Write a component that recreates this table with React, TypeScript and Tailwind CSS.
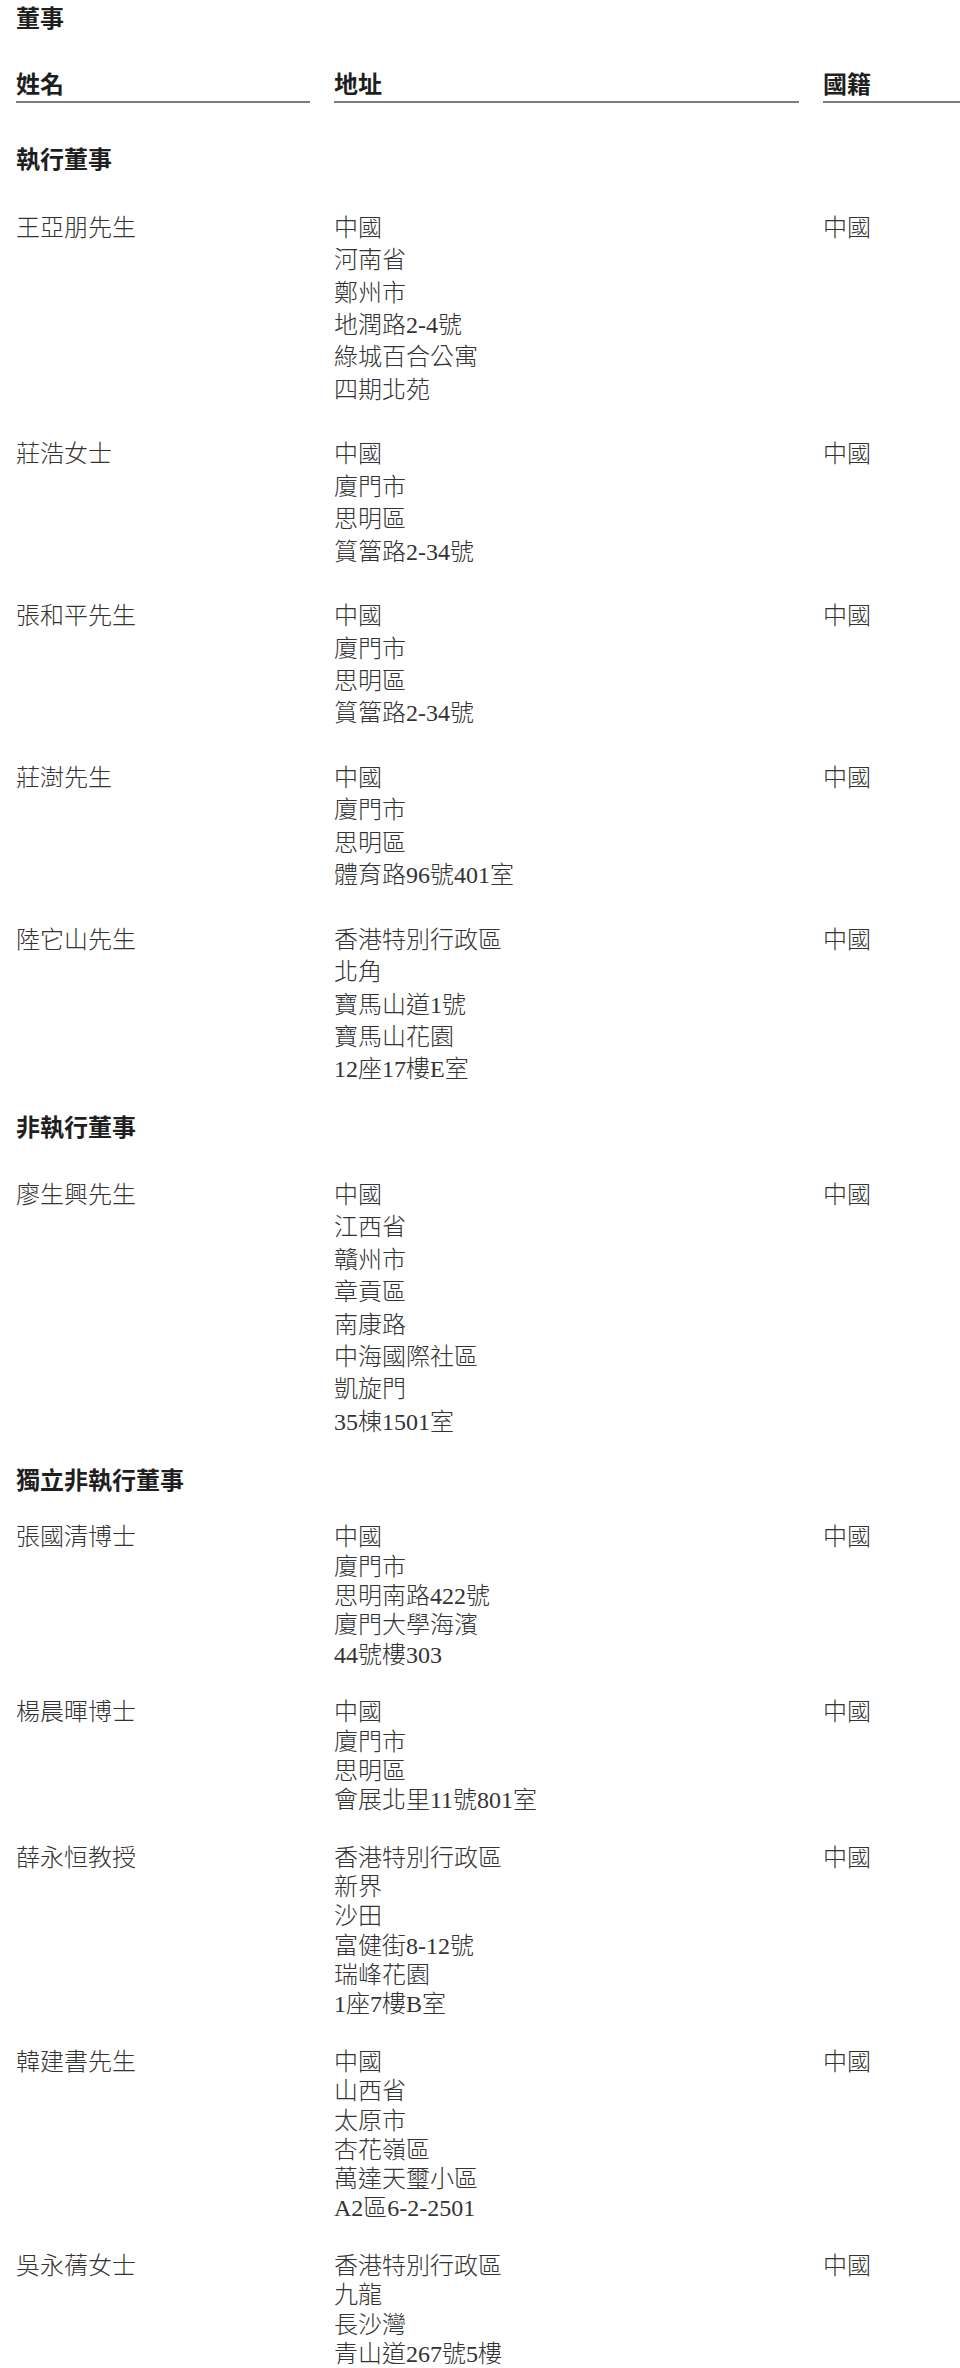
import React from "react";

type Entry = { name: string; lines: string[] };

const exec: Entry[] = [
  { name: "王亞朋先生", lines: ["中國", "河南省", "鄭州市", "地潤路2-4號", "綠城百合公寓", "四期北苑"] },
  { name: "莊浩女士", lines: ["中國", "廈門市", "思明區", "篔簹路2-34號"] },
  { name: "張和平先生", lines: ["中國", "廈門市", "思明區", "篔簹路2-34號"] },
  { name: "莊澍先生", lines: ["中國", "廈門市", "思明區", "體育路96號401室"] },
  { name: "陸它山先生", lines: ["香港特別行政區", "北角", "寶馬山道1號", "寶馬山花園", "12座17樓E室"] },
];

const nonExec: Entry[] = [
  { name: "廖生興先生", lines: ["中國", "江西省", "贛州市", "章貢區", "南康路", "中海國際社區", "凱旋門", "35棟1501室"] },
];

const indep: Entry[] = [
  { name: "張國清博士", lines: ["中國", "廈門市", "思明南路422號", "廈門大學海濱", "44號樓303"] },
  { name: "楊晨暉博士", lines: ["中國", "廈門市", "思明區", "會展北里11號801室"] },
  { name: "薛永恒教授", lines: ["香港特別行政區", "新界", "沙田", "富健街8-12號", "瑞峰花園", "1座7樓B室"] },
  { name: "韓建書先生", lines: ["中國", "山西省", "太原市", "杏花嶺區", "萬達天璽小區", "A2區6-2-2501"] },
  { name: "吳永蒨女士", lines: ["香港特別行政區", "九龍", "長沙灣", "青山道267號5樓"] },
];

function Row({ e, lh }: { e: Entry; lh: string }) {
  return (
    <div className={`grid grid-cols-[294px_465px_137px] gap-x-6 ${lh}`}>
      <div>{e.name}</div>
      <div>
        {e.lines.map((l, i) => (
          <div key={i}>{l}</div>
        ))}
      </div>
      <div>中國</div>
    </div>
  );
}

export default function App() {
  return (
    <div className="w-[960px] bg-white pl-4 pt-[3px] text-[24px] text-[#333333] font-[family-name:'Liberation_Serif','Noto_Sans_CJK_TC',serif]">
      <div className="font-bold leading-[32.4px] text-[#1f1f1f]">董事</div>

      <div className="mt-[37.6px] grid grid-cols-[294px_465px_137px] gap-x-6 font-bold leading-[24px] text-[#1f1f1f]">
        <div className="border-b-2 border-[#7d7d7d] pb-[4px]">姓名</div>
        <div className="border-b-2 border-[#7d7d7d] pb-[4px]">地址</div>
        <div className="border-b-2 border-[#7d7d7d] pb-[4px]">國籍</div>
      </div>

      <div className="mt-[40.8px] font-bold leading-[32.4px] text-[#1f1f1f]">執行董事</div>
      <div className="mt-[35.6px] flex flex-col gap-[32.2px] font-light">
        {exec.map((e) => (
          <Row key={e.name} e={e} lh="leading-[32.4px]" />
        ))}
      </div>

      <div className="mt-[26px] font-bold leading-[32.4px] text-[#1f1f1f]">非執行董事</div>
      <div className="mt-[34.6px] flex flex-col font-light">
        {nonExec.map((e) => (
          <Row key={e.name} e={e} lh="leading-[32.4px]" />
        ))}
      </div>

      <div className="mt-[26.8px] font-bold leading-[32.4px] text-[#1f1f1f]">獨立非執行董事</div>
      <div className="mt-[26px] flex flex-col gap-[28.4px] font-light">
        {indep.map((e) => (
          <Row key={e.name} e={e} lh="leading-[29.3px]" />
        ))}
      </div>
    </div>
  );
}
